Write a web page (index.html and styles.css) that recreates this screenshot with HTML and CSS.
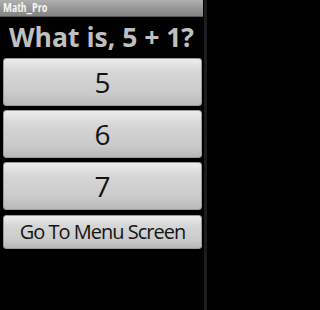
FILE: index.html
```html
<!DOCTYPE html>
<html>
<head>
<meta charset="utf-8">
<link rel="stylesheet" href="styles.css">
</head>
<body>
<div class="frame">
  <div class="screen">
    <div class="titlebar">Math_Pro</div>
    <div class="question">What is, 5 + 1?</div>
    <div class="answers">
      <button class="btn big">5</button>
      <button class="btn big">6</button>
      <button class="btn big">7</button>
      <button class="btn menu">Go To Menu Screen</button>
    </div>
  </div>
  <div class="edge"></div>
</div>
</body>
</html>
```
FILE: styles.css
```css
html, body {
  margin: 0;
  padding: 0;
  background: #000;
}
.frame {
  display: flex;
  width: 207px;
  height: 310px;
  background: #000;
}
.screen {
  width: 203px;
  display: flex;
  flex-direction: column;
}
.edge {
  width: 3px;
  margin-left: 1px;
  background: #1c1c1c;
}
.titlebar {
  height: 17px;
  box-sizing: border-box;
  padding-left: 3px;
  font-family: "Open Sans", "DejaVu Sans", sans-serif;
  font-weight: bold;
  font-size: 11.5px;
  font-stretch: 87.5%;
  line-height: 16px;
  color: #f2f2f2;
  background: linear-gradient(#b0b0b0, #979797 50%, #838383);
  border-bottom: 1px solid #5a5a5a;
}
.question {
  height: 40px;
  font-family: "Open Sans", "DejaVu Sans", sans-serif;
  font-weight: bold;
  font-size: 26.5px;
  line-height: 40px;
  color: #c0c0c0;
  text-align: center;
  white-space: nowrap;
}
.answers {
  display: flex;
  flex-direction: column;
  gap: 4px;
  padding: 1px 1px 0 3px;
}
.btn {
  display: block;
  width: 199px;
  margin: 0;
  padding: 0;
  border: 1px solid #9a9a9a;
  border-radius: 3px;
  background: linear-gradient(#ececec, #d6d6d6 30%, #cacaca 75%, #b8b8b8);
  font-family: "Open Sans", "DejaVu Sans", sans-serif;
  font-weight: normal;
  color: #141414;
  text-align: center;
  box-sizing: border-box;
}
.big {
  height: 48px;
  font-size: 28px;
  line-height: 44px;
}
.menu {
  margin-top: 1px;
  height: 34px;
  font-size: 20px;
  letter-spacing: -1px;
  line-height: 30px;
  white-space: nowrap;
}
```
